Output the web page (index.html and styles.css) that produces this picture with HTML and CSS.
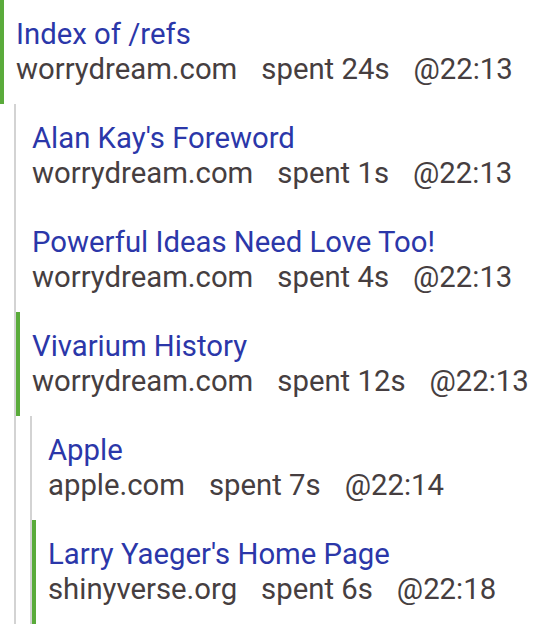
FILE: index.html
```html
<!DOCTYPE html>
<html>
<head>
<meta charset="utf-8">
<link rel="stylesheet" href="styles.css">
</head>
<body>
<div class="tree">
  <div class="item active">
    <a class="title" href="#">Index of /refs</a>
    <div class="meta"><span>worrydream.com</span><span>spent 24s</span><span>@22:13</span></div>
  </div>
  <div class="children">
    <div class="item">
      <a class="title" href="#">Alan Kay's Foreword</a>
      <div class="meta"><span>worrydream.com</span><span>spent 1s</span><span>@22:13</span></div>
    </div>
    <div class="item">
      <a class="title" href="#">Powerful Ideas Need Love Too!</a>
      <div class="meta"><span>worrydream.com</span><span>spent 4s</span><span>@22:13</span></div>
    </div>
    <div class="item active">
      <a class="title" href="#">Vivarium History</a>
      <div class="meta"><span>worrydream.com</span><span>spent 12s</span><span>@22:13</span></div>
    </div>
    <div class="children">
      <div class="item">
        <a class="title" href="#">Apple</a>
        <div class="meta"><span>apple.com</span><span>spent 7s</span><span>@22:14</span></div>
      </div>
      <div class="item active">
        <a class="title" href="#">Larry Yaeger's Home Page</a>
        <div class="meta"><span>shinyverse.org</span><span>spent 6s</span><span>@22:18</span></div>
      </div>
    </div>
  </div>
</div>
</body>
</html>
```
FILE: styles.css
```css
html, body {
  margin: 0;
  padding: 0;
  background: #ffffff;
}
body {
  font-family: Roboto, "Liberation Sans", sans-serif;
  font-size: 29.3px;
  line-height: 35px;
}
.tree {
  display: flex;
  flex-direction: column;
}
.item {
  border-left: 4px solid transparent;
  padding: 17px 0 17px 12px;
  display: flex;
  flex-direction: column;
}
.item.active {
  border-left-color: #5aab3b;
}
.title {
  color: #2b37a9;
  text-decoration: none;
  white-space: nowrap;
}
.meta {
  color: #463e40;
  display: flex;
  gap: 24px;
  white-space: nowrap;
}
.children {
  margin-left: 14px;
  border-left: 2px solid #d3d3d3;
  display: flex;
  flex-direction: column;
}
```
